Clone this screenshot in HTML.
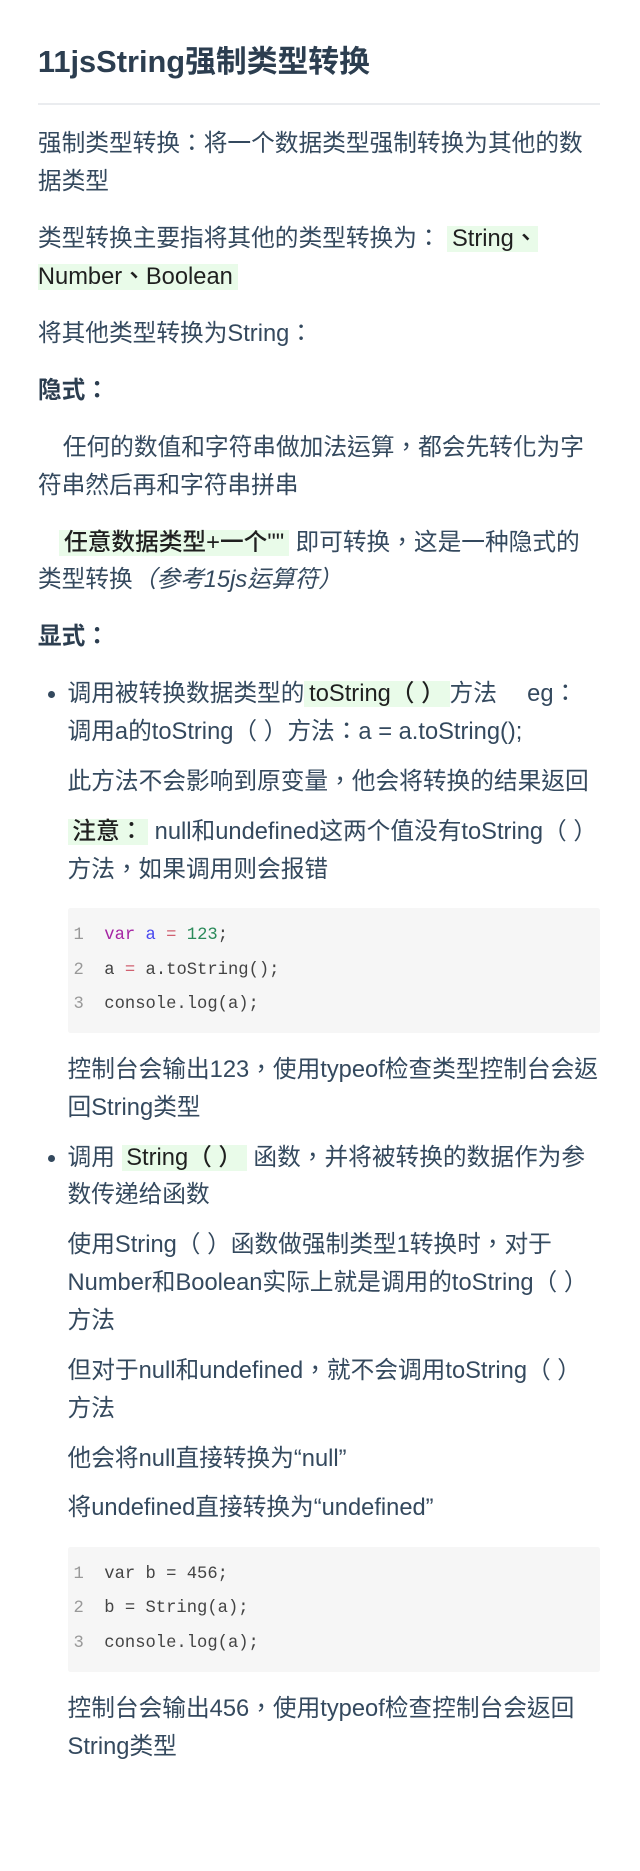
<!DOCTYPE html>
<html><head><meta charset="utf-8">
<style>
html,body{margin:0;padding:0;background:#fff;}
body{width:640px;height:1871px;overflow:hidden;}
.w{zoom:1.185185;width:540px;}
.c{padding:0 34px 0 32px;font-family:"Liberation Sans","Noto Sans CJK TC",sans-serif;color:#34495e;font-size:20px;line-height:32px;}
h1{font-size:26px;line-height:36px;margin:0;padding-top:35px;padding-bottom:16px;border-bottom:2px solid #eaecef;color:#2c3e50;font-weight:700;}
p{margin:16px 0;}
.p1{margin-top:18px;}
b{color:#2c3e50;}
.hl{background:#e9fbe9;color:#1f1f1f;padding:0 4px;font-weight:500;}
.ind{text-indent:21px;}
ul{margin:16px 0;padding-left:25px;}
li{margin:0;}
li p{margin:10px 0;}
li p:first-child{margin-top:0;}
pre{background:#f6f6f6;margin:16px 0;padding:9px 0;border-radius:2px;font-family:"Liberation Mono","Noto Serif CJK SC",monospace;font-size:14.5px;line-height:29px;color:#444;}
pre span.n{display:inline-block;width:31px;padding-left:5px;box-sizing:border-box;color:#999;}
.k{color:#a626a4}.v{color:#4a4af0}.o{color:#d06070}.num{color:#2a8a5a}
i{font-style:italic;}
</style></head><body><div class="w"><div class="c">
<h1>11jsString强制类型转换</h1>
<p class="p1">强制类型转换：将一个数据类型强制转换为其他的数据类型</p>
<p>类型转换主要指将其他的类型转换为： <span class="hl">String、Number、Boolean</span></p>
<p>将其他类型转换为String：</p>
<p><b>隐式：</b></p>
<p class="ind">任何的数值和字符串做加法运算，都会先转化为字符串然后再和字符串拼串</p>
<p style="padding-left:18px"><span class="hl">任意数据类型+一个""</span> 即可转换，这是一种隐式的<br><span style="margin-left:-18px">类型转换<i>（参考15js运算符）</i></span></p>
<p><b>显式：</b></p>
<ul>
<li><p>调用被转换数据类型的<span class="hl">toString（ ）</span>方法　 eg：调用a的toString（ ）方法：a = a.toString();</p>
<p>此方法不会影响到原变量，他会将转换的结果返回</p>
<p><span class="hl">注意：</span> null和undefined这两个值没有toString（ ）方法，如果调用则会报错</p>
<pre><span class="n">1</span><span class="k">var</span> <span class="v">a</span> <span class="o">=</span> <span class="num">123</span>;
<span class="n">2</span>a <span class="o">=</span> a.toString();
<span class="n">3</span>console.log(a);</pre>
<p>控制台会输出123，使用typeof检查类型控制台会返回String类型</p></li>
<li><p>调用 <span class="hl">String（ ）</span> 函数，并将被转换的数据作为参数传递给函数</p>
<p>使用String（ ）函数做强制类型1转换时，对于Number和Boolean实际上就是调用的toString（ ）方法</p>
<p>但对于null和undefined，就不会调用toString（ ）方法</p>
<p>他会将null直接转换为“null”</p>
<p>将undefined直接转换为“undefined”</p>
<pre><span class="n">1</span>var b = 456;
<span class="n">2</span>b = String(a);
<span class="n">3</span>console.log(a);</pre>
<p>控制台会输出456，使用typeof检查控制台会返回String类型</p></li>
</ul>
</div></div></body></html>
